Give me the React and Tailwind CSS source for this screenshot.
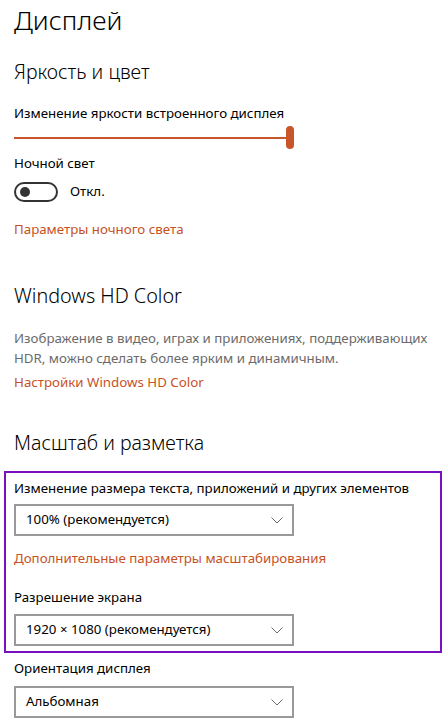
import React from "react";

const font = { fontFamily: '"Noto Sans", "Open Sans", sans-serif' };

function Chevron() {
  return (
    <svg width="12" height="7" viewBox="0 0 12 7" fill="none">
      <path d="M0.5 0.5 L6 6 L11.5 0.5" stroke="#6b6b6b" strokeWidth="1" />
    </svg>
  );
}

function Select({ value }) {
  return (
    <div className="w-[280px] h-[32px] border-2 border-[#999999] flex items-center justify-between pl-[10px] pr-[9px] text-[13.3px] text-black">
      <span>{value}</span>
      <Chevron />
    </div>
  );
}

export default function App() {
  return (
    <div className="w-[448px] h-[728px] bg-white overflow-hidden text-black" style={font}>
      <div className="px-[14px]">
        <div className="text-[26.5px] font-light leading-[40px]">Дисплей</div>
        <div className="mt-[18px] text-[19.5px] font-light leading-[28px]">Яркость и цвет</div>
        <div className="mt-[17px] text-[13.3px] leading-[20px]">Изменение яркости встроенного дисплея</div>
        <div className="mt-[3px] w-[280px] h-[23px] flex items-center">
          <div className="flex-1 h-[2px] bg-[#c9552a]" />
          <div className="w-[8px] h-[23px] rounded-full bg-[#c9552a]" />
        </div>
        <div className="mt-[4px] text-[13.3px] leading-[20px]">Ночной свет</div>
        <div className="mt-[9px] flex items-center h-[20px]">
          <div className="w-[44px] h-[20px] rounded-full border-2 border-[#333] flex items-center pl-[4px]">
            <div className="w-[10px] h-[10px] rounded-full bg-[#333]" />
          </div>
          <span className="ml-[12px] text-[13.3px]">Откл.</span>
        </div>
        <div className="mt-[17px] text-[13.3px] leading-[20px] text-[#c7511f]">Параметры ночного света</div>
        <div className="mt-[43px] text-[19.8px] font-light leading-[28px]">Windows HD Color</div>
        <div className="mt-[18px] text-[13.3px] leading-[20px] text-[#6b6b6b]">
          Изображение в видео, играх и приложениях, поддерживающих HDR, можно сделать более ярким и динамичным.
        </div>
        <div className="mt-[4px] text-[13.3px] leading-[20px] text-[#c7511f]">Настройки Windows HD Color</div>
        <div className="mt-[37px] text-[19.5px] font-light leading-[28px]">Масштаб и разметка</div>
      </div>
      <div className="mt-[14px] ml-[4px] w-[438px] border-2 border-[#7a0fbf] pl-[8px] pt-[5px] pb-[5px]">
        <div className="text-[13.3px] leading-[20px]">Изменение размера текста, приложений и других элементов</div>
        <div className="mt-[6px]">
          <Select value="100% (рекомендуется)" />
        </div>
        <div className="mt-[12px] text-[13.3px] leading-[20px] text-[#c7511f]">Дополнительные параметры масштабирования</div>
        <div className="mt-[19px] text-[13.3px] leading-[20px]">Разрешение экрана</div>
        <div className="mt-[7px]">
          <Select value="1920 × 1080 (рекомендуется)" />
        </div>
      </div>
      <div className="px-[14px]">
        <div className="mt-[5px] text-[13.3px] leading-[20px]">Ориентация дисплея</div>
        <div className="mt-[8px]">
          <Select value="Альбомная" />
        </div>
      </div>
    </div>
  );
}
